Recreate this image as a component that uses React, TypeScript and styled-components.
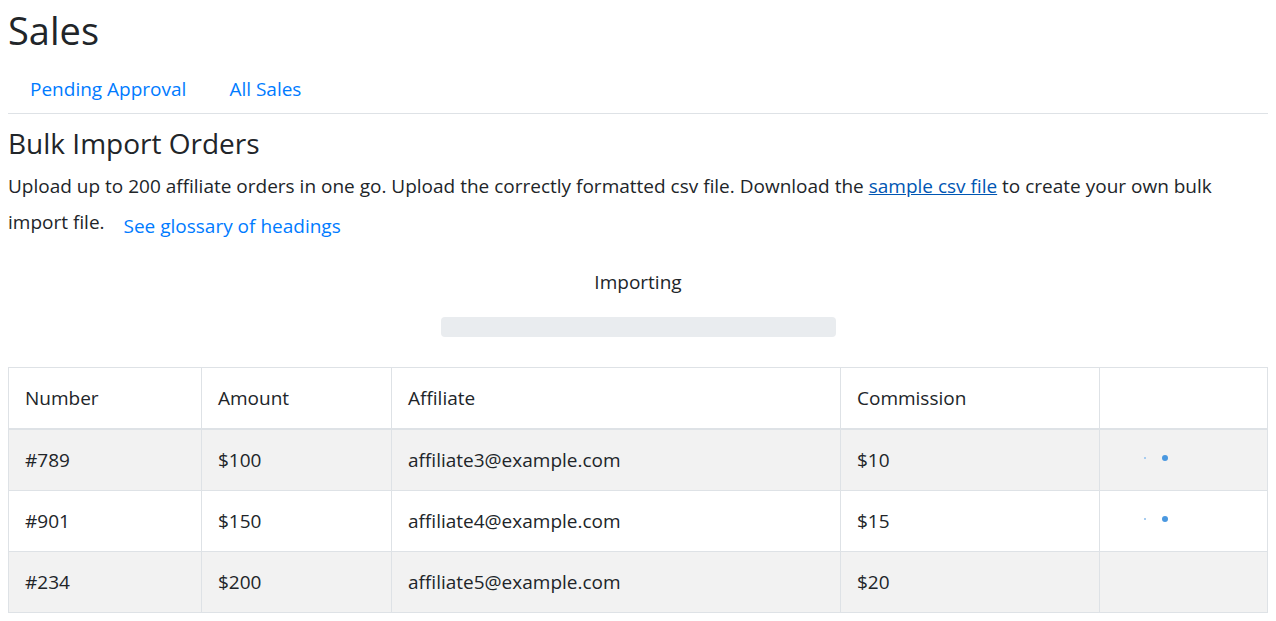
import React from "react";
import styled, { createGlobalStyle } from "styled-components";

const GlobalStyle = createGlobalStyle`
  body {
    margin: 0;
    font-family: "Open Sans", "Noto Sans", sans-serif;
    font-size: 19px;
    line-height: 29px;
    color: #212529;
    background: #fff;
  }
`;

const Page = styled.div`
  padding: 7px 8px 0;
`;

const Title = styled.h1`
  font-size: 38px;
  font-weight: 400;
  line-height: 46px;
  margin: 0 0 13px;
`;

const Tabs = styled.nav`
  display: flex;
  border-bottom: 1px solid #dee2e6;
`;

const Tab = styled.a`
  color: #007bff;
  text-decoration: none;
  padding: 9px 21px 9px 22px;
`;

const Section = styled.section`
  padding-top: 12px;
`;

const Heading = styled.h3`
  font-size: 28px;
  font-weight: 400;
  line-height: 34px;
  margin: 0 0 12px;
`;

const Intro = styled.p`
  margin: 0;
`;

const CsvLink = styled.a`
  color: #0056b3;
  text-decoration: underline;
`;

const GlossaryButton = styled.a`
  display: inline-block;
  vertical-align: -4px;
  color: #007bff;
  text-decoration: none;
  padding: 10px 14px 4px 13px;
  border: 1px solid transparent;
`;

const Status = styled.div`
  display: flex;
  flex-direction: column;
  align-items: center;
  padding-top: 22px;
`;

const StatusLabel = styled.div``;

const Progress = styled.div`
  width: 395px;
  height: 20px;
  margin-top: 20px;
  border-radius: 4px;
  background: #e9ecef;
  overflow: hidden;
`;

const Table = styled.table`
  width: 100%;
  margin-top: 30px;
  border-collapse: collapse;
  table-layout: fixed;
  line-height: 28px;
`;

const HeadCell = styled.th`
  text-align: left;
  font-weight: 400;
  padding: 16px;
  border: 1px solid #dee2e6;
  border-bottom-width: 2px;
  vertical-align: top;
`;

const Row = styled.tr<{ $striped: boolean }>`
  background: ${(p) => (p.$striped ? "#f2f2f2" : "#fff")};
`;

const Cell = styled.td`
  padding: 16px;
  border: 1px solid #dee2e6;
  vertical-align: top;
  height: 28px;
`;

const Dots = styled.svg`
  display: block;
`;

const columns = [193, 190, 449, 259];

const rows = [
  { n: "#789", a: "$100", aff: "affiliate3@example.com", c: "$10", dots: true },
  { n: "#901", a: "$150", aff: "affiliate4@example.com", c: "$15", dots: true },
  { n: "#234", a: "$200", aff: "affiliate5@example.com", c: "$20", dots: false },
];

export default function App() {
  return (
    <>
      <GlobalStyle />
      <Page>
        <Title>Sales</Title>
        <Tabs>
          <Tab href="#">Pending Approval</Tab>
          <Tab href="#">All Sales</Tab>
        </Tabs>
        <Section>
          <Heading>Bulk Import Orders</Heading>
          <Intro>
            Upload up to 200 affiliate orders in one go. Upload the correctly formatted csv file. Download the{" "}
            <CsvLink href="#">sample csv file</CsvLink> to create your own bulk import file.{" "}
            <GlossaryButton href="#">See glossary of headings</GlossaryButton>
          </Intro>
          <Status>
            <StatusLabel>Importing</StatusLabel>
            <Progress />
          </Status>
          <Table>
            <colgroup>
              {columns.map((w) => (
                <col key={w} style={{ width: w }} />
              ))}
              <col />
            </colgroup>
            <thead>
              <tr>
                <HeadCell>Number</HeadCell>
                <HeadCell>Amount</HeadCell>
                <HeadCell>Affiliate</HeadCell>
                <HeadCell>Commission</HeadCell>
                <HeadCell />
              </tr>
            </thead>
            <tbody>
              {rows.map((r, i) => (
                <Row key={r.n} $striped={i % 2 === 0}>
                  <Cell>{r.n}</Cell>
                  <Cell>{r.a}</Cell>
                  <Cell>{r.aff}</Cell>
                  <Cell>{r.c}</Cell>
                  <Cell>
                    {r.dots && (
                      <Dots width="52" height="16" viewBox="0 0 52 16">
                        <rect x="28" y="11" width="2" height="2" fill="#a8cdf0" />
                        <circle cx="49" cy="12" r="3" fill="#4a98e0" />
                      </Dots>
                    )}
                  </Cell>
                </Row>
              ))}
            </tbody>
          </Table>
        </Section>
      </Page>
    </>
  );
}
